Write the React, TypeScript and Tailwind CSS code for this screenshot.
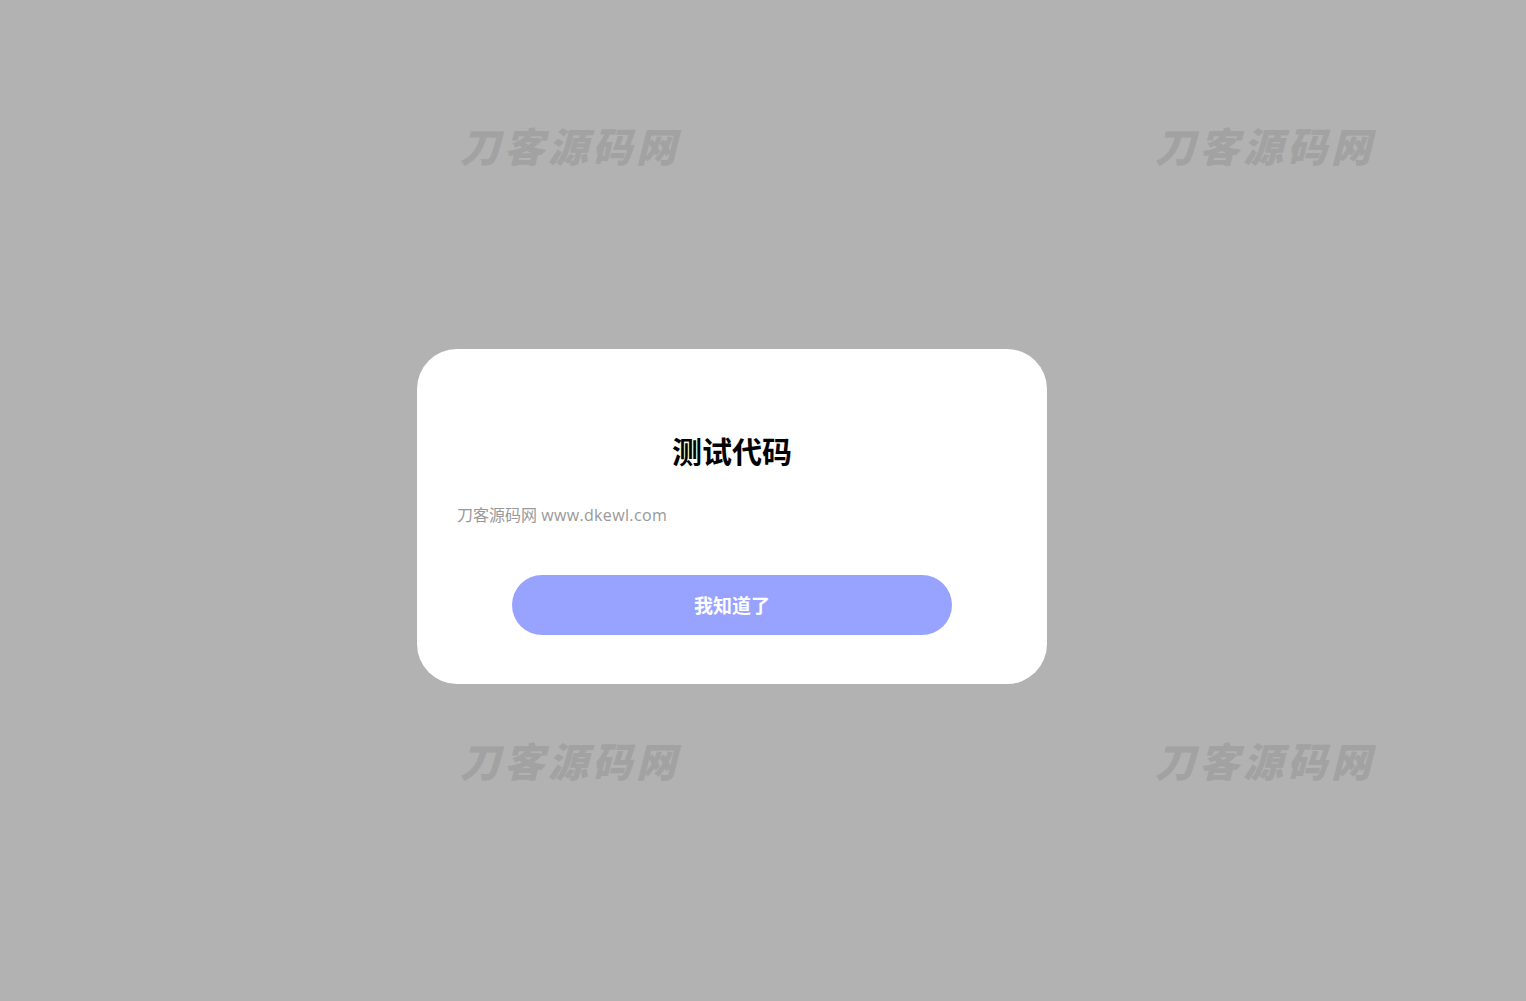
const marks = [
  "left-[460px] top-[121px]",
  "left-[1155px] top-[121px]",
  "left-[460px] top-[736px]",
  "left-[1155px] top-[736px]",
];

export default function App() {
  return (
    <div className="relative h-[1001px] w-full overflow-hidden bg-[#b2b2b2] font-['Open_Sans','Noto_Sans_CJK_SC',sans-serif]">
      {/* watermark tiles behind the dialog */}
      <div className="pointer-events-none absolute inset-0 select-none">
        {marks.map((pos) => (
          <span
            key={pos}
            className={`absolute ${pos} font-['Noto_Sans_CJK_SC',sans-serif] text-[40px] leading-[48px] font-black italic tracking-[4px] text-[#a2a2a2]`}
          >
            刀客源码网
          </span>
        ))}
      </div>

      <div className="relative flex h-full items-center justify-center pr-[62px] pt-[32px]">
        <div className="flex w-[630px] flex-col rounded-[40px] bg-white px-10 pt-[79px] pb-[49px]">
          <h2 className="text-center font-['Noto_Sans_CJK_SC',sans-serif] text-[30px] leading-[45px] font-bold text-black">
            测试代码
          </h2>
          <p className="mt-[30px] text-[16px] leading-6 text-[#999999]">
            刀客源码网 <span className="tracking-[0.35px]">www.dkewl.com</span>
          </p>
          <button className="mx-auto mt-[48px] h-[60px] w-[440px] rounded-full bg-[#98a3ff] font-['Noto_Sans_CJK_SC',sans-serif] text-[19px] font-bold text-white">
            我知道了
          </button>
        </div>
      </div>
    </div>
  );
}
